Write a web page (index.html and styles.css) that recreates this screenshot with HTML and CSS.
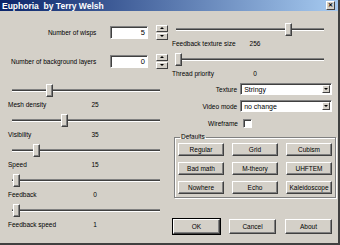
FILE: index.html
```html
<!DOCTYPE html>
<html lang="en">
<head>
  <meta charset="UTF-8" />
  <title>Euphoria</title>
  <link rel="stylesheet" href="styles.css">
</head>
<body>
  <div class="win">
    <div class="title">
      <span>Euphoria&nbsp; by Terry Welsh</span>
      <span class="close">&#x2715;</span>
    </div>

    <div class="content">
      <div class="col left">
        <div class="spin-row first">
          <span class="spin-label">Number of wisps</span>
          <div class="edit">5</div>
          <div class="spin"><span class="up"></span><span class="down"></span></div>
        </div>
        <div class="spin-row">
          <span class="spin-label">Number of background layers</span>
          <div class="edit">0</div>
          <div class="spin"><span class="up"></span><span class="down"></span></div>
        </div>

        <div class="slider-block">
          <div class="slider"><div class="track"></div><div class="thumb" style="left: 38px"></div></div>
          <div class="slider-text"><span class="name">Mesh density</span><span class="val">25</span></div>
        </div>
        <div class="slider-block">
          <div class="slider"><div class="track"></div><div class="thumb" style="left: 53px"></div></div>
          <div class="slider-text"><span class="name">Visibility</span><span class="val">35</span></div>
        </div>
        <div class="slider-block">
          <div class="slider"><div class="track"></div><div class="thumb" style="left: 25px"></div></div>
          <div class="slider-text"><span class="name">Speed</span><span class="val">15</span></div>
        </div>
        <div class="slider-block">
          <div class="slider"><div class="track"></div><div class="thumb" style="left: 5px"></div></div>
          <div class="slider-text"><span class="name">Feedback</span><span class="val">0</span></div>
        </div>
        <div class="slider-block">
          <div class="slider"><div class="track"></div><div class="thumb" style="left: 5px"></div></div>
          <div class="slider-text"><span class="name">Feedback speed</span><span class="val">1</span></div>
        </div>
      </div>

      <div class="col right">
        <div class="slider-block">
          <div class="slider"><div class="track"></div><div class="thumb" style="left: 113px"></div></div>
          <div class="slider-text"><span class="name">Feedback texture size</span><span class="val">256</span></div>
        </div>
        <div class="slider-block">
          <div class="slider"><div class="track"></div><div class="thumb" style="left: 3px"></div></div>
          <div class="slider-text"><span class="name">Thread priority</span><span class="val">0</span></div>
        </div>

        <div class="field-row">
          <span class="field-label">Texture</span>
          <div class="combo"><span>Stringy</span><span class="drop"></span></div>
        </div>
        <div class="field-row">
          <span class="field-label">Video mode</span>
          <div class="combo"><span>no change</span><span class="drop"></span></div>
        </div>
        <div class="field-row check-row">
          <span class="field-label">Wireframe</span>
          <div class="checkbox"></div>
        </div>

        <fieldset class="group">
          <legend>Defaults</legend>
          <div class="preset-grid">
            <button>Regular</button>
            <button>Grid</button>
            <button>Cubism</button>
            <button>Bad math</button>
            <button>M-theory</button>
            <button>UHFTEM</button>
            <button>Nowhere</button>
            <button>Echo</button>
            <button>Kaleidoscope</button>
          </div>
        </fieldset>

        <div class="actions">
          <button class="default">OK</button>
          <button>Cancel</button>
          <button>About</button>
        </div>
      </div>
    </div>
  </div>
</body>
</html>
```

FILE: styles.css
```css
body {
  margin: 0;
  background-color: #d4d0c8;
  font-family: "Liberation Sans", Arial, sans-serif;
  font-size: 6.5px;
  color: #000;
}
.win {
  width: 340px;
  height: 245px;
  box-sizing: border-box;
  background-color: #d4d0c8;
  border-right: 2px solid #404040;
  border-bottom: 2px solid #404040;
  overflow: hidden;
}
.title {
  height: 11px;
  background: linear-gradient(to right, #0a246a, #a6caf0);
  color: #fff;
  font-weight: bold;
  font-size: 8.5px;
  padding-left: 2px;
  padding-right: 3px;
  display: flex;
  align-items: center;
  justify-content: space-between;
}
.close {
  width: 7px;
  height: 7px;
  background-color: #d4d0c8;
  color: #000;
  font-size: 6px;
  line-height: 7px;
  text-align: center;
  border: 1px solid;
  border-color: #fff #404040 #404040 #fff;
}
.content {
  display: flex;
}
.col {
  display: flex;
  flex-direction: column;
}
.left {
  width: 160px;
  margin-left: 8px;
  padding-top: 15px;
}
.right {
  width: 160px;
  margin-left: 4px;
  padding-top: 12px;
}

/* spin edits */
.spin-row {
  display: flex;
  align-items: center;
  height: 13px;
  margin-bottom: 16px;
}
.spin-label {
  width: 89px;
  text-align: right;
  margin-right: 14px;
}
.edit {
  width: 34px;
  height: 11px;
  background-color: #fff;
  border: 1px solid;
  border-color: #808080 #fff #fff #808080;
  box-shadow: inset 1px 1px #404040;
  text-align: right;
  padding-right: 2px;
  line-height: 11px;
  font-size: 7.5px;
}
.spin {
  margin-left: 8px;
  display: flex;
  flex-direction: column;
  gap: 1px;
}
.spin span {
  width: 10px;
  height: 5px;
  border: 1px solid;
  border-color: #fff #404040 #404040 #fff;
  background-color: #d4d0c8;
  position: relative;
}
.spin span::after {
  content: "";
  position: absolute;
  left: 3px;
  top: 1px;
  border-left: 2px solid transparent;
  border-right: 2px solid transparent;
}
.spin .up::after {
  border-bottom: 2px solid #000;
}
.spin .down::after {
  border-top: 2px solid #000;
}

/* trackbars */
.slider-block {
  height: 30px;
}
.slider {
  position: relative;
  height: 13px;
  width: 156px;
}
.track {
  position: absolute;
  left: 4px;
  right: 4px;
  top: 5px;
  height: 1px;
  background-color: #404040;
  border-top: 1px solid #808080;
  border-bottom: 1px solid #fff;
}
.thumb {
  position: absolute;
  top: 0;
  width: 5px;
  height: 11px;
  background-color: #d4d0c8;
  border: 1px solid;
  border-color: #fff #404040 #404040 #fff;
  box-shadow: inset -1px -1px #808080;
}
.slider-text {
  display: flex;
  height: 12px;
  align-items: center;
  margin-top: 1px;
}
.slider-text .name {
  width: 74px;
}
.slider-text .val {
  width: 26px;
  text-align: center;
}
.right .slider-text .name {
  width: 70px;
}

/* combos */
.field-row {
  display: flex;
  align-items: center;
  height: 12px;
  margin-bottom: 5px;
}
.field-label {
  width: 66px;
  text-align: right;
  margin-right: 3px;
}
.combo {
  width: 88px;
  height: 10px;
  background-color: #fff;
  border: 1px solid;
  border-color: #808080 #fff #fff #808080;
  box-shadow: inset 1px 1px #404040;
  display: flex;
  align-items: center;
  justify-content: space-between;
  padding-left: 3px;
  font-size: 7px;
}
.drop {
  width: 8px;
  height: 8px;
  margin-right: 1px;
  background-color: #d4d0c8;
  border: 1px solid;
  border-color: #fff #404040 #404040 #fff;
  box-sizing: border-box;
  position: relative;
}
.drop::after {
  content: "";
  position: absolute;
  left: 1px;
  top: 2px;
  border-left: 2px solid transparent;
  border-right: 2px solid transparent;
  border-top: 2px solid #000;
}
.check-row {
  height: 9px;
  margin-top: 2px;
  margin-bottom: 5px;
}
.check-row .field-label {
  margin-right: 5px;
}
.checkbox {
  width: 7px;
  height: 7px;
  background-color: #fff;
  border: 1px solid;
  border-color: #808080 #fff #fff #808080;
  box-shadow: inset 1px 1px #404040;
}

/* defaults group */
.group {
  margin: 0 0 0 2px;
  width: 162px;
  height: 65px;
  box-sizing: border-box;
  border: 1px solid #808080;
  box-shadow: 1px 1px #fff, inset 1px 1px #fff;
  padding: 2px 3px 0 3px;
}
.group legend {
  padding: 0 1px;
  margin-left: 2px;
  line-height: 8px;
}
.preset-grid {
  display: grid;
  grid-template-columns: repeat(3, 46px);
  column-gap: 8px;
  row-gap: 6px;
}
button {
  font-family: "Liberation Sans", Arial, sans-serif;
  font-size: 6.5px;
  color: #000;
  background-color: #d4d0c8;
  border: 1px solid;
  border-color: #fff #404040 #404040 #fff;
  box-shadow: inset -1px -1px #808080;
  height: 13px;
  padding: 0;
  margin: 0;
}
.actions {
  display: flex;
  gap: 9px;
  margin-top: 21px;
  margin-left: 1px;
}
.actions button {
  width: 47px;
  height: 15px;
}
.actions .default {
  outline: 1px solid #000;
}
```
